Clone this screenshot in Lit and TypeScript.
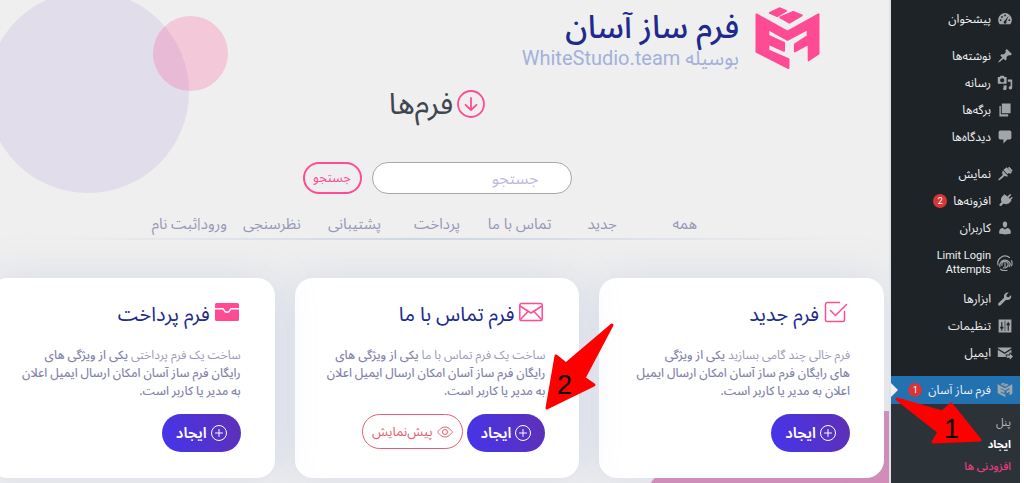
import { LitElement, html, css, svg, nothing } from "lit";
import { customElement, property } from "lit/decorators.js";
import { classMap } from "lit/directives/class-map.js";

const FONT = css`"Roboto", "Noto Sans Arabic", "DejaVu Sans", sans-serif`;

const shapes: Record<string, unknown> = {
  dash: svg`<path fill="currentColor" d="M3.2 16.5a8.600 8.600 0 1 1 13.600 0z"/><g fill="#1d2327"><circle cx="4.600" cy="11.500" r="1.100"/><circle cx="6.200" cy="7.500" r="1.100"/><circle cx="10" cy="5.600" r="1.100"/><circle cx="15.400" cy="11.500" r="1.100"/><path d="M14.400 6.400 11.600 13a1.800 1.800 0 1 1-2-.8z"/></g>`,
  pin: svg`<path fill="currentColor" d="m10.44 3.02 1.82-1.82 6.36 6.35-1.83 1.82c-1.05-.68-2.48-.57-3.41.36l-.75.75c-.92.93-1.04 2.35-.35 3.41l-1.83 1.82-2.41-2.41-2.8 2.79c-.42.42-3.38 2.71-3.8 2.29s1.86-3.39 2.28-3.81l2.79-2.79L4.1 9.36l1.83-1.82c1.05.69 2.48.57 3.4-.36l.75-.75c.93-.92 1.05-2.35.36-3.41z"/>`,
  media: svg`<path fill="currentColor" fill-rule="evenodd" d="M1 2.500h2.500L4.500 1h4l1 1.500H12v8.500H1zM6.500 4a2.700 2.700 0 1 0 0 5.400 2.700 2.700 0 0 0 0-5.400z"/><path fill="currentColor" d="M13.500 5.500H19V16a2.200 2.200 0 1 1-2-2.200V8.500h-3.500zM8 13.200l4-.4V17a2.200 2.200 0 1 1-2-2.200H8z"/>`,
  pages: svg`<path fill="currentColor" d="M6 14V2h11v12zM3 5h1.800v10.300H14V18H3z"/>`,
  comment: svg`<path fill="currentColor" d="M4 2h12a2 2 0 0 1 2 2v7a2 2 0 0 1-2 2h-3l-5 5v-5H4a2 2 0 0 1-2-2V4a2 2 0 0 1 2-2z"/>`,
  brush: svg`<path fill="currentColor" d="m12 1.500 6.500 6.500-1.600 1.600-2.300-.8-1.400 1.400L8 5 9.700 3.300zM7.200 5.700l6.700 6.700c-1.500 1-3 .8-4.400-.1-1.300 1.600-5.800 6-7.800 5.800-1-1.500 4.100-5.600 5.500-7C6.500 10 6 7.500 7.200 5.700z"/><path fill="currentColor" d="m13.500 2.500 2-1.500 4 4.500-1.500 2z"/>`,
  plug: svg`<path fill="currentColor" d="M13.100 4.400 15.900 1.500c.9-.6 2 .5 1.300 1.500l-2.700 2.900 1.400 1.400 2-2c1-.6 2 .4 1.300 1.400l-2 2 .9.900-2.500 2.500c-2 2-5 2.400-7.300 1l-2.800 2.800c-1.200 1-3-.3-2.500-1.500l2.800-3c-1.400-2.200-1-5.200 1-7.200L9.300 1.700z"/>`,
  user: svg`<path fill="currentColor" d="M10 9.250c-2.270 0-2.730-3.440-2.730-3.440C7 4.020 7.820 2 9.970 2c2.160 0 2.980 2.020 2.710 3.810 0 0-.41 3.440-2.680 3.440zm0 2.570L12.720 10c2.390 0 4.520 2.330 4.520 4.530v2.490s-3.650 1.130-7.240 1.130c-3.650 0-7.240-1.130-7.240-1.130v-2.490c0-2.250 1.940-4.480 4.470-4.480z"/>`,
  finger: svg`<g fill="none" stroke="currentColor" stroke-width="1.500"><path d="M1.500 13A9 9 0 0 1 16 3.500M18 6.500a9 9 0 0 1 0 7.500M3.800 15A6.500 6.500 0 1 1 16.500 11c0 2-1 3-1.500 4M4 17.500A9.500 9.500 0 0 0 13 19M6.500 13.500a3.900 3.900 0 1 1 7 0c-1 2.500-4 3.500-6 2M10 9.500V15"/></g>`,
  wrench: svg`<path fill="currentColor" d="M16.700 9.800a5 5 0 0 1-5.300 1.100l-7 7c-.8.800-2 .6-2.600 0-.7-.7-.7-1.900 0-2.600l7-7A5 5 0 0 1 14.600 2L11.800 4.900l.4 2.500 2.500.4 2.900-2.800a5 5 0 0 1-.9 4.800z"/>`,
  sliders: svg`<path fill="currentColor" fill-rule="evenodd" d="M2 2h16v16H2zM9.600 3.500v13h.8v-13zM5.300 5v6H4v2h1.300v3h1.400v-3H8v-2H6.700V5zM13.300 5v2H12v2h1.300v7h1.400V9H16V7h-1.300V5z"/>`,
  mail: svg`<path fill="currentColor" d="M1 3h17v1.200L9.500 9.500 1 4.200zM1 6l8.500 5.300L18 6v4.500l-2-1.500-1 3h-4v3H1z"/><path fill="currentColor" d="M12 13h4v-2.500l4 4-4 4V16h-4z"/>`,
};

const brandPaths = svg`<g stroke="currentColor" stroke-width="2" stroke-linejoin="round" fill="currentColor"><path d="M14.500 6 24.300 1.300 31 4 22 9.300zM25 10.500 38.300 5 47 8.500 34.500 16z"/><path d="M1 7.500 32.500 25 64 7.500V47.500L54 54V37.500L40 45V38L53 29.500V22.500L32.500 33.500 13 22.500V29L29 36.500V44.500L13 37.500V44L33.500 53V62L1 45.500z"/></g>`;

@customElement("side-icon")
class SideIcon extends LitElement {
  @property() declare name: string;
  static styles = css`
    :host { display: block; flex: none; width: 16px; height: 16px; color: #a2a6ab; }
    svg { display: block; width: 100%; height: 100%; }
  `;
  render() {
    return this.name === "brand"
      ? html`<svg viewBox="-3 -3 71 70" aria-hidden="true">${brandPaths}</svg>`
      : html`<svg viewBox="0 0 20 20" aria-hidden="true">${shapes[this.name]}</svg>`;
  }
}

interface Item { text: string; icon: string; badge?: string; gap?: boolean; tall?: boolean; active?: boolean }

const menu: Item[] = [
  { text: "پیشخوان", icon: "dash" },
  { text: "نوشته‌ها", icon: "pin", gap: true },
  { text: "رسانه", icon: "media" },
  { text: "برگه‌ها", icon: "pages" },
  { text: "دیدگاه‌ها", icon: "comment" },
  { text: "نمایش", icon: "brush", gap: true },
  { text: "افزونه‌ها", icon: "plug", badge: "2" },
  { text: "کاربران", icon: "user" },
  { text: "Limit Login Attempts", icon: "finger", tall: true },
  { text: "ابزارها", icon: "wrench" },
  { text: "تنظیمات", icon: "sliders" },
  { text: "ایمیل", icon: "mail" },
  { text: "فرم ساز آسان", icon: "brand", badge: "1", gap: true, active: true },
];

@customElement("admin-menu")
class AdminMenu extends LitElement {
  static styles = css`
    :host { display: block; background: #1d2327; font: 12px/14px ${FONT}; }
    nav { min-height: 100%; display: flex; flex-direction: column; }
    ul { list-style: none; margin: 0; padding: 5px 0 0; }
    a { color: #f0f0f1; text-decoration: none; }
    .item { display: flex; align-items: center; gap: 6px; height: 27px; padding: 0 7px; }
    .gap { margin-top: 10px; }
    .tall { height: 44px; font-size: 11px; }
    .tall .label { width: 60px; }
    .active { position: relative; height: 28px; background: #2271b1; }
    .active::after {
      content: ""; position: absolute; left: 0; top: 7px;
      border: 7px solid transparent; border-left-color: #efefef; border-right: 0;
    }
    .badge {
      width: 14px; height: 14px; border-radius: 7px; background: #d63638;
      font-size: 9px; text-align: center; color: #fff;
    }
    .sub { flex: 1; background: #2c3338; padding: 8px 9px 0; line-height: 22px; font-size: 11px; }
    .sub a { color: #b4b9be; }
    .sub .current { color: #fff; font-weight: 700; }
    .sub .addons { color: #ec3d83; font-weight: 500; }
  `;
  render() {
    return html`<nav aria-label="فهرست">
      <ul>
        ${menu.map((m) => html`<li>
          <a href="#" class=${classMap({ item: true, gap: !!m.gap, tall: !!m.tall, active: !!m.active })}>
            <side-icon .name=${m.icon}></side-icon>
            <span class="label">${m.text}</span>
            ${m.badge ? html`<span class="badge">${m.badge}</span>` : nothing}
          </a>
        </li>`)}
      </ul>
      <ul class="sub">
        <li><a href="#">پنل</a></li>
        <li><a href="#" class="current">ایجاد</a></li>
        <li><a href="#" class="addons">افزودنی ها</a></li>
      </ul>
    </nav>`;
  }
}

const plus = html`<svg class="plus" viewBox="0 0 16 16" fill="none" stroke="currentColor" aria-hidden="true"><circle cx="8" cy="8" r="7.500"/><path d="M8 4.500v7M4.500 8h7" stroke-linecap="round"/></svg>`;

const cardIcons: Record<string, unknown> = {
  check: html`<svg class="glyph" viewBox="0 0 24 24" fill="none" stroke="currentColor" stroke-width="1.500" stroke-linecap="round" stroke-linejoin="round" aria-hidden="true"><path d="M15.500 2.500H3.500a2 2 0 0 0-2 2v15.500a1.500 1.500 0 0 0 1.500 1.500h16a1.500 1.500 0 0 0 1.500-1.500v-8.500"/><path d="m6.500 10.500 5 5L22.500 4.500"/></svg>`,
  envelope: html`<svg class="glyph" viewBox="0 0 24 24" fill="none" stroke="currentColor" stroke-width="1.500" stroke-linejoin="round" aria-hidden="true"><rect x=".8" y="3.500" width="22.400" height="17" rx="1.800"/><path d="m1 6 11 7 11-7M1.500 19.500 9 11.500M22.500 19.500 15 11.500"/></svg>`,
  inbox: html`<svg class="glyph" viewBox="0 0 24 24" fill="currentColor" aria-hidden="true"><path d="M1.500 3h21a1.500 1.500 0 0 1 1.500 1.500V8h-8q-1 0-1.500 1.500a2.600 2.600 0 0 1-5 0Q9 8 8 8H0V4.500A1.500 1.500 0 0 1 1.500 3z"/><path d="M0 9.500h7.500q.6 0 1 1.200a3.800 3.800 0 0 0 7 0q.4-1.200 1-1.200H24v10a1.500 1.500 0 0 1-1.500 1.500h-21A1.500 1.500 0 0 1 0 19.500z"/></svg>`,
};

const cards = [
  {
    title: "فرم جدید", icon: "check", lead: "فرم خالی چند گامی بسازید", preview: false,
    note: ["یکی از ویژگی", "های رایگان فرم ساز آسان امکان ارسال ایمیل", "اعلان به مدیر یا کاربر است."],
  },
  {
    title: "فرم تماس با ما", icon: "envelope", lead: "ساخت یک فرم تماس با ما", preview: true,
    note: ["یکی از ویژگی های", "رایگان فرم ساز آسان امکان ارسال ایمیل اعلان", "به مدیر یا کاربر است."],
  },
  {
    title: "فرم پرداخت", icon: "inbox", lead: "ساخت یک فرم پرداختی", preview: false,
    note: ["یکی از ویژگی های", "رایگان فرم ساز آسان امکان ارسال ایمیل اعلان", "به مدیر یا کاربر است."],
  },
];

const tabs = ["همه", "جدید", "تماس با ما", "پرداخت", "پشتیبانی", "نظرسنجی", "ورود|ثبت نام"];

@customElement("form-card")
class FormCard extends LitElement {
  @property({ attribute: false }) declare data: (typeof cards)[number];
  static styles = css`
    :host {
      display: block; box-sizing: border-box; background: #fff; border-radius: 18px;
      padding: 20px 34px 26px 20px; box-shadow: 0 0 40px rgba(150, 170, 215, 0.28);
    }
    h2 { display: flex; align-items: center; gap: 5px; margin: 0 2px 16px; font-size: 20px; line-height: 32px; font-weight: 400; color: #202a8d; }
    .glyph { width: 24px; height: 24px; color: #ff4b93; margin-bottom: 4px; }
    p { margin: 0 0 14px; font-size: 12px; line-height: 18px; color: #9a9aba; }
    .line { display: block; }
    strong { font-weight: 500; color: #8383ab; }
    .row { display: flex; align-items: flex-start; gap: 4px; }
    button { font-family: inherit; display: flex; align-items: center; justify-content: center; gap: 4px; cursor: pointer; }
    .create {
      height: 38px; border: 0; border-radius: 19px; padding: 0 14px; color: #fff; font-size: 15px; font-weight: 600;
      background: linear-gradient(70deg, #4535ec, #5c30bb 90%);
    }
    .plus { width: 16px; height: 16px; }
    .preview { height: 35px; border: 1px solid #e4606d; border-radius: 18px; padding: 0 9px; background: #fff; color: #e4606d; font-size: 13px; }
    .eye { width: 16px; height: 16px; }
  `;
  render() {
    const d = this.data;
    return html`
      <h2>${cardIcons[d.icon]}${d.title}</h2>
      <p>
        <span class="line">${d.lead} <strong>${d.note[0]}</strong></span>
        <strong class="line">${d.note[1]}</strong>
        <strong class="line">${d.note[2]}</strong>
      </p>
      <div class="row">
        <button class="create">${plus}ایجاد</button>
        ${d.preview ? html`<button class="preview">
          <svg class="eye" viewBox="0 0 16 16" fill="none" stroke="currentColor" aria-hidden="true"><path d="M.6 8S3.500 3 8 3s7.400 5 7.400 5-2.900 5-7.400 5S.6 8 .6 8z"/><circle cx="8" cy="8" r="2.500"/></svg>پیش‌نمایش</button>` : nothing}
      </div>`;
  }
}

@customElement("app-root")
class AppRoot extends LitElement {
  static styles = css`
    :host {
      display: flex; direction: rtl; position: relative; height: 100vh; overflow: hidden;
      box-sizing: border-box; padding-right: 4px; background: #fff; font-family: ${FONT};
    }
    admin-menu { flex: 0 0 129px; }
    main { flex: 1; min-width: 0; position: relative; overflow: hidden; background: #efefef; border-right: 2px solid #dfe3e8; }
    .content { position: relative; margin: 0 5px 0 -10px; }
    .deco { position: absolute; border-radius: 50%; }
    .violet { width: 202px; height: 202px; left: -13px; top: -9px; background: #e1ddea; }
    .rose { width: 75px; height: 75px; left: 153px; top: 16px; background: rgba(255, 75, 147, 0.24); }
    .slab { position: absolute; right: 0; bottom: 0; width: 240px; height: 72px; fill: #d58bb6; }
    header { display: flex; gap: 16px; padding: 7px 64px 0 0; height: 70px; box-sizing: border-box; }
    .logo { width: 65px; height: 63px; color: #ff4b93; }
    h1 { margin: 0; font-size: 32px; line-height: 40px; font-weight: 500; color: #202a8d; }
    .by { margin: 0; font-size: 20px; line-height: 22px; color: #a3b1da; }
    .section { display: flex; justify-content: center; align-items: center; gap: 4px; margin: 14px 0 0; font-size: 30px; line-height: 40px; font-weight: 400; color: #3f4650; }
    .down { width: 28px; height: 28px; color: #ff4b93; }
    form { display: flex; justify-content: center; gap: 10px; margin-top: 38px; }
    input, .go { box-sizing: border-box; height: 32px; border-radius: 16px; font-family: inherit; }
    input { width: 200px; border: 1px solid #a4a8ac; background: #fff; padding: 0 32px; font-size: 16px; }
    input::placeholder { color: #bdb9de; opacity: 1; }
    .go { width: 59px; border: 2px solid #ff4b93; background: transparent; color: #ff4b93; font-size: 13px; padding: 0; }
    .tabs { display: grid; grid-template-columns: repeat(7, 1fr); max-width: 578px; margin: 16px auto 0; line-height: 28px; font-size: 15px; text-align: center; }
    .tabs a { color: #9797b8; text-decoration: none; white-space: nowrap; }
    .rule { height: 2px; border: 0; margin: 0; background: linear-gradient(90deg, transparent 5%, #cfd6e4 50%, transparent 97%); }
    .cards { display: grid; grid-template-columns: repeat(3, 1fr); gap: 20px; margin-top: 38px; }
    .marks { position: absolute; left: 0; top: 0; width: 1024px; height: 483px; pointer-events: none; font: 27px "Liberation Sans", sans-serif; direction: ltr; }
  `;
  render() {
    return html`
      <admin-menu></admin-menu>
      <main>
        <div class="deco violet"></div>
        <div class="deco rose"></div>
        <svg class="slab" viewBox="0 0 240 72" aria-hidden="true"><path d="M2 72Q4 67 12 63L110 0h130v72z"/></svg>
        <div class="content">
          <header>
            <svg class="logo" viewBox="0 0 65 64" aria-hidden="true">${brandPaths}</svg>
            <div>
              <h1>فرم ساز آسان</h1>
              <p class="by">بوسیله WhiteStudio.team</p>
            </div>
          </header>
          <h2 class="section">
            <svg class="down" viewBox="0 0 28 28" fill="none" stroke="currentColor" stroke-width="1.800" stroke-linecap="round" stroke-linejoin="round" aria-hidden="true"><circle cx="14" cy="14" r="13"/><path d="M14 8v12M8.500 14.800 14 20l5.500-5.200"/></svg>فرم‌ها
          </h2>
          <form @submit=${(e: Event) => e.preventDefault()}>
            <input type="text" placeholder="جستجو" aria-label="جستجو" />
            <button class="go">جستجو</button>
          </form>
          <nav class="tabs">${tabs.map((t) => html`<a href="#">${t}</a>`)}</nav>
          <hr class="rule" />
          <div class="cards">${cards.map((c) => html`<form-card .data=${c}></form-card>`)}</div>
        </div>
      </main>
      <svg class="marks" viewBox="0 0 1024 483" aria-hidden="true">
        <g fill="#f00" stroke="#f00" stroke-width="3" stroke-linejoin="round">
          <path d="M547 408 556 356 566 364 612 325 584 378 594 385z"/>
          <path d="M897 399 942 412 951 404 980 440 933 442 939 432z"/>
        </g>
        <text x="557" y="394">2</text>
        <text x="944" y="438">1</text>
      </svg>`;
  }
}
